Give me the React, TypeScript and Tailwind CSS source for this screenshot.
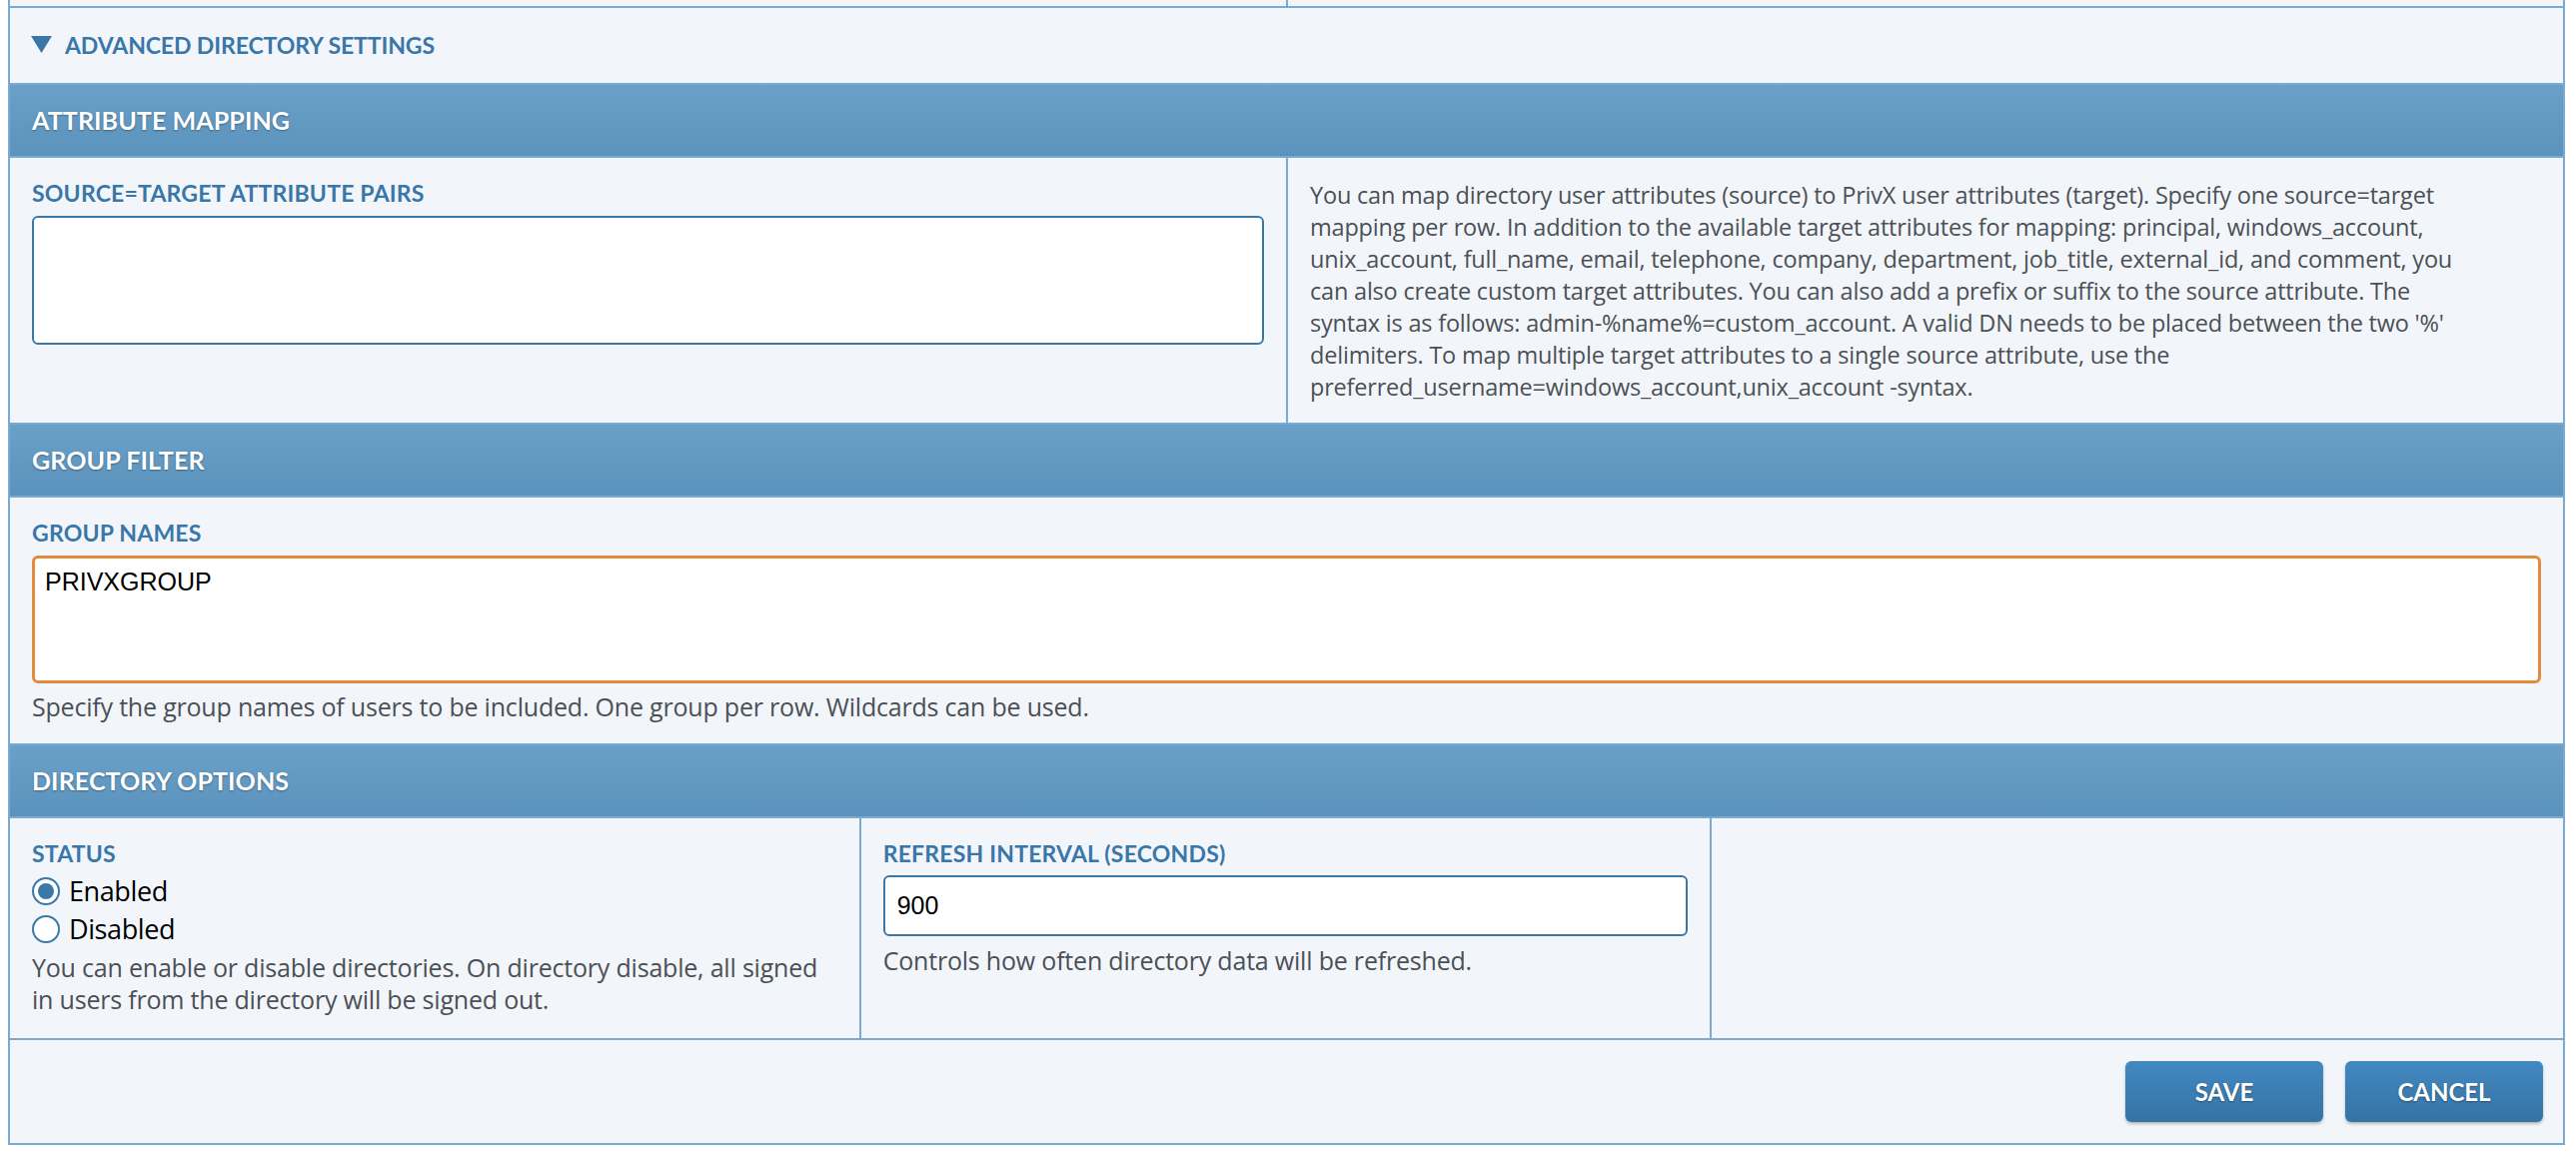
import React from 'react';

const bar = "h-[75px] flex items-center px-[22px] border-y-2 border-[#7aaad0] bg-gradient-to-b from-[#6aa0c8] to-[#5a93bd] text-white font-bold text-[25px] tracking-[0.1px] [text-shadow:0_1px_2px_rgba(0,0,0,0.35)]";
const label = "text-[#3a77a9] font-bold text-[23px] leading-[24px] uppercase tracking-[0.2px]";
const body = "font-['Open_Sans',sans-serif] text-[#4b5056] leading-[32px] tracking-[-0.2px]";
const help = `${body} text-[25px]`;

function SectionBar({ title }: { title: string }) {
  return <div className={bar}>{title}</div>;
}

function Radio({ checked, text }: { checked?: boolean; text: string }) {
  return (
    <label className="flex items-center gap-[9px] h-[38px] cursor-pointer">
      <span className="w-[28px] h-[28px] rounded-full border-[2.5px] border-[#3a78a8] bg-white flex items-center justify-center">
        {checked && <span className="w-[16px] h-[16px] rounded-full bg-[#3a78a8]" />}
      </span>
      <span className="text-black text-[27px] font-['Open_Sans',sans-serif] tracking-[-0.4px]">{text}</span>
    </label>
  );
}

export default function App() {
  return (
    <div className="min-h-screen bg-white pl-[8px] pr-[11px] font-['Lato','Open_Sans',sans-serif]">
      <div className="bg-[#f2f6fa] border-x-2 border-b-2 border-[#7aaad0]">
        {/* tail of previous section */}
        <div className="grid grid-cols-[1279px_1fr] h-[8px] border-b-2 border-[#7aaad0]">
          <div className="border-r-2 border-[#7aaad0]" />
          <div />
        </div>

        <div className="h-[75px] flex items-center gap-[13px] pl-[21px] text-[#3a77a9]">
          <svg width="21" height="17" viewBox="0 0 21 17" className="mt-[-2px]">
            <path d="M0 0 H21 L10.5 17 Z" fill="#3a77a9" />
          </svg>
          <span className="font-bold text-[23px] tracking-[-0.1px]">ADVANCED DIRECTORY SETTINGS</span>
        </div>

        <SectionBar title="ATTRIBUTE MAPPING" />
        <div className="grid grid-cols-[1279px_1fr]">
          <div className="border-r-2 border-[#7aaad0] px-[22px] pt-[23px]">
            <div className={label}>SOURCE=TARGET ATTRIBUTE PAIRS</div>
            <textarea className="mt-[11px] block w-full h-[129px] bg-white border-2 border-[#3a78a8] rounded-[6px] resize-none outline-none" />
          </div>
          <div className={`${body} text-[23.5px] px-[22px] pt-[21px] pb-[20px]`}>
            You can map directory user attributes (source) to PrivX user attributes (target). Specify one source=target<br />
            mapping per row. In addition to the available target attributes for mapping: principal, windows_account,<br />
            unix_account, full_name, email, telephone, company, department, job_title, external_id, and comment, you<br />
            can also create custom target attributes. You can also add a prefix or suffix to the source attribute. The<br />
            syntax is as follows: admin-%name%=custom_account. A valid DN needs to be placed between the two '%'<br />
            delimiters. To map multiple target attributes to a single source attribute, use the<br />
            preferred_username=windows_account,unix_account -syntax.
          </div>
        </div>

        <SectionBar title="GROUP FILTER" />
        <div className="px-[22px] pt-[23px] pb-[21px]">
          <div className={label}>GROUP NAMES</div>
          <textarea
            defaultValue="PRIVXGROUP"
            className="mt-[11px] block w-full h-[128px] bg-white border-[3px] border-[#e38a3c] rounded-[6px] resize-none outline-none px-[10px] py-[8px] text-black text-[25px] leading-[30px] font-['Liberation_Sans',Arial,sans-serif]"
          />
          <div className={`${help} mt-[7px]`}>Specify the group names of users to be included. One group per row. Wildcards can be used.</div>
        </div>

        <SectionBar title="DIRECTORY OPTIONS" />
        <div className="grid grid-cols-3 border-b-2 border-[#7aaad0]">
          <div className="border-r-2 border-[#7aaad0] px-[22px] pt-[23px] pb-[23px]">
            <div className={label}>STATUS</div>
            <div className="mt-[7px] flex flex-col">
              <Radio checked text="Enabled" />
              <Radio text="Disabled" />
            </div>
            <div className={`${help} mt-[3px]`}>
              You can enable or disable directories. On directory disable, all signed<br />
              in users from the directory will be signed out.
            </div>
          </div>
          <div className="border-r-2 border-[#7aaad0] px-[22px] pt-[23px]">
            <div className={label}>REFRESH INTERVAL (SECONDS)</div>
            <input
              defaultValue="900"
              className="mt-[10px] block w-full h-[61px] bg-white border-2 border-[#3a78a8] rounded-[6px] outline-none px-[12px] text-black text-[25px] font-['Liberation_Sans',Arial,sans-serif]"
            />
            <div className={`${help} mt-[8px]`}>Controls how often directory data will be refreshed.</div>
          </div>
          <div />
        </div>

        <div className="h-[103px] flex items-center justify-end gap-[22px] px-[20px]">
          <button className="w-[198px] h-[61px] rounded-[6px] bg-gradient-to-b from-[#4289c1] to-[#3673a5] text-white font-bold text-[24px] shadow-[0_2px_3px_rgba(0,0,0,0.25)] [text-shadow:0_1px_2px_rgba(0,0,0,0.35)]">SAVE</button>
          <button className="w-[198px] h-[61px] rounded-[6px] bg-gradient-to-b from-[#4289c1] to-[#3673a5] text-white font-bold text-[24px] shadow-[0_2px_3px_rgba(0,0,0,0.25)] [text-shadow:0_1px_2px_rgba(0,0,0,0.35)]">CANCEL</button>
        </div>
      </div>
    </div>
  );
}
